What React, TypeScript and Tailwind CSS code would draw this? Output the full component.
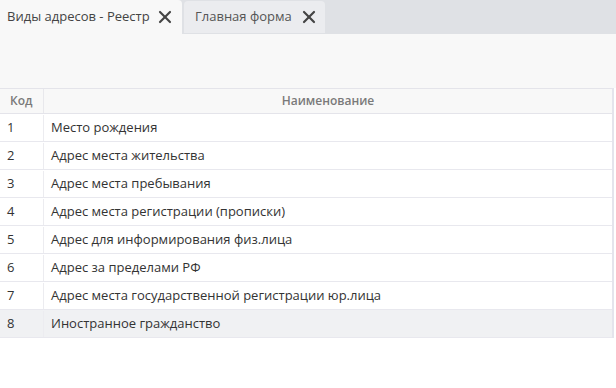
import { X } from "lucide-react";

const rows = [
  { code: 1, name: "Место рождения" },
  { code: 2, name: "Адрес места жительства" },
  { code: 3, name: "Адрес места пребывания" },
  { code: 4, name: "Адрес места регистрации (прописки)" },
  { code: 5, name: "Адрес для информирования физ.лица" },
  { code: 6, name: "Адрес за пределами РФ" },
  { code: 7, name: "Адрес места государственной регистрации юр.лица" },
  { code: 8, name: "Иностранное гражданство" },
];

export default function App() {
  return (
    <div
      className="flex h-[388px] w-[616px] flex-col bg-white text-[13px] text-[#333]"
      style={{ fontFamily: "'Open Sans', 'Noto Sans', sans-serif" }}
    >
      <div className="flex h-[34px] items-end bg-[#dfe1e5]">
        <div className="flex h-[34px] w-[182px] items-center justify-between rounded-tr-[4px] bg-[#f8f8f8] pl-[7px] pr-[7px]">
          <span className="text-[#444]">Виды адресов - Реестр</span>
          <X size={20} strokeWidth={2.6} className="text-[#444]" />
        </div>
        <div className="ml-[2px] mb-[1px] flex h-[32px] w-[141px] items-center justify-between rounded-t-[4px] bg-[#ebecef] pl-[11px] pr-[6px]">
          <span className="text-[#555]">Главная форма</span>
          <X size={20} strokeWidth={2.6} className="text-[#444]" />
        </div>
      </div>
      <div className="h-[54px] bg-[#f8f8f8]" />
      <div className="mr-[2px] border-r-[2px] border-[#e4e4ec]">
        <div className="flex h-[26px] border-y border-[#e4e4ea] bg-[#f8f8f8] text-[12px] font-semibold text-[#7a7a7a]">
          <div className="flex w-[44px] items-center border-r border-[#e8e8ec] pl-[10px]">Код</div>
          <div className="flex flex-1 items-center justify-center">Наименование</div>
        </div>
        {rows.map((r) => (
          <div
            key={r.code}
            className={
              r.code === 8
                ? "flex h-[28px] border-b border-[#e8e8ee] bg-[#f0f1f3] pt-[1px]"
                : "flex h-[28px] border-b border-[#e8e8ee] bg-white pt-[1px]"
            }
          >
            <div className="flex w-[44px] items-center border-r border-[#ececf0] pl-[7px]">{r.code}</div>
            <div className="flex flex-1 items-center pl-[7px]">{r.name}</div>
          </div>
        ))}
      </div>
    </div>
  );
}
